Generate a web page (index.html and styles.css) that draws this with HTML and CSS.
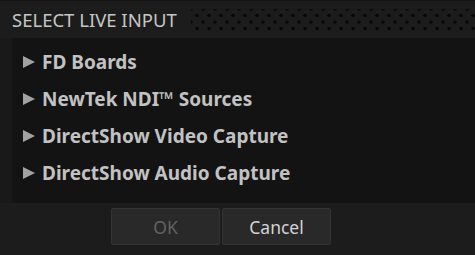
FILE: index.html
```html
<!DOCTYPE html>
<html lang="en">

<head>
    <meta charset="utf-8">
    <title>Select Live Input</title>
    <link rel="stylesheet" href="styles.css">
</head>

<body>
    <div class="dialog">
        <header class="titlebar">
            <h1>SELECT LIVE INPUT</h1>
            <div class="grip"></div>
        </header>

        <div class="body">
            <div class="gutter"></div>
            <ul class="sources">
                <li><span class="arrow"></span>FD Boards</li>
                <li><span class="arrow"></span>NewTek NDI™ Sources</li>
                <li><span class="arrow"></span>DirectShow Video Capture</li>
                <li><span class="arrow"></span>DirectShow Audio Capture</li>
            </ul>
        </div>

        <footer class="buttons">
            <button class="btn" disabled>OK</button>
            <button class="btn">Cancel</button>
        </footer>
    </div>
</body>

</html>
```

FILE: styles.css
```css
body {
    margin: 0;
    padding: 0;
    background-color: #1c1c1c;
    font-family: "Noto Sans", "Open Sans", sans-serif;
}

.dialog {
    width: 475px;
    height: 255px;
    display: flex;
    flex-direction: column;
    background-color: #1c1c1c;
    border-top: 1px solid #141414;
    box-sizing: border-box;
}

.titlebar {
    height: 37px;
    display: flex;
    align-items: center;
}

.titlebar h1 {
    margin: 0 14px 0 12px;
    font-size: 18.5px;
    font-weight: normal;
    color: #c6c6c6;
    white-space: nowrap;
}

.grip {
    flex: 1;
    height: 24px;
    margin-top: 2px;
    background-image:
        radial-gradient(circle, #080808 1.3px, transparent 2.2px),
        radial-gradient(circle, #080808 1.3px, transparent 2.2px);
    background-size: 12px 13px;
    background-position: 0 0, 6px 6.5px;
}

.body {
    height: 165px;
    display: flex;
}

.gutter {
    width: 12px;
    background-color: #191919;
}

.sources {
    flex: 1;
    margin: 0;
    padding: 5px 0 0 0;
    list-style: none;
    background-color: #131313;
}

.sources li {
    height: 37px;
    display: flex;
    align-items: center;
    font-size: 19px;
    font-weight: bold;
    color: #c2c2c2;
}

.arrow {
    width: 0;
    height: 0;
    margin: 0 7px 0 11px;
    border-top: 6px solid transparent;
    border-bottom: 6px solid transparent;
    border-left: 12px solid #a2a2a2;
}

.buttons {
    display: flex;
    gap: 2px;
    padding: 5px 0 0 111px;
}

.btn {
    width: 109px;
    height: 37px;
    background-color: #292929;
    border: 1px solid #333333;
    border-radius: 2px;
    font-family: "Noto Sans", "Open Sans", sans-serif;
    font-size: 17.5px;
    color: #d4d4d4;
    padding: 0;
}

.btn:disabled {
    color: #626262;
}
```
